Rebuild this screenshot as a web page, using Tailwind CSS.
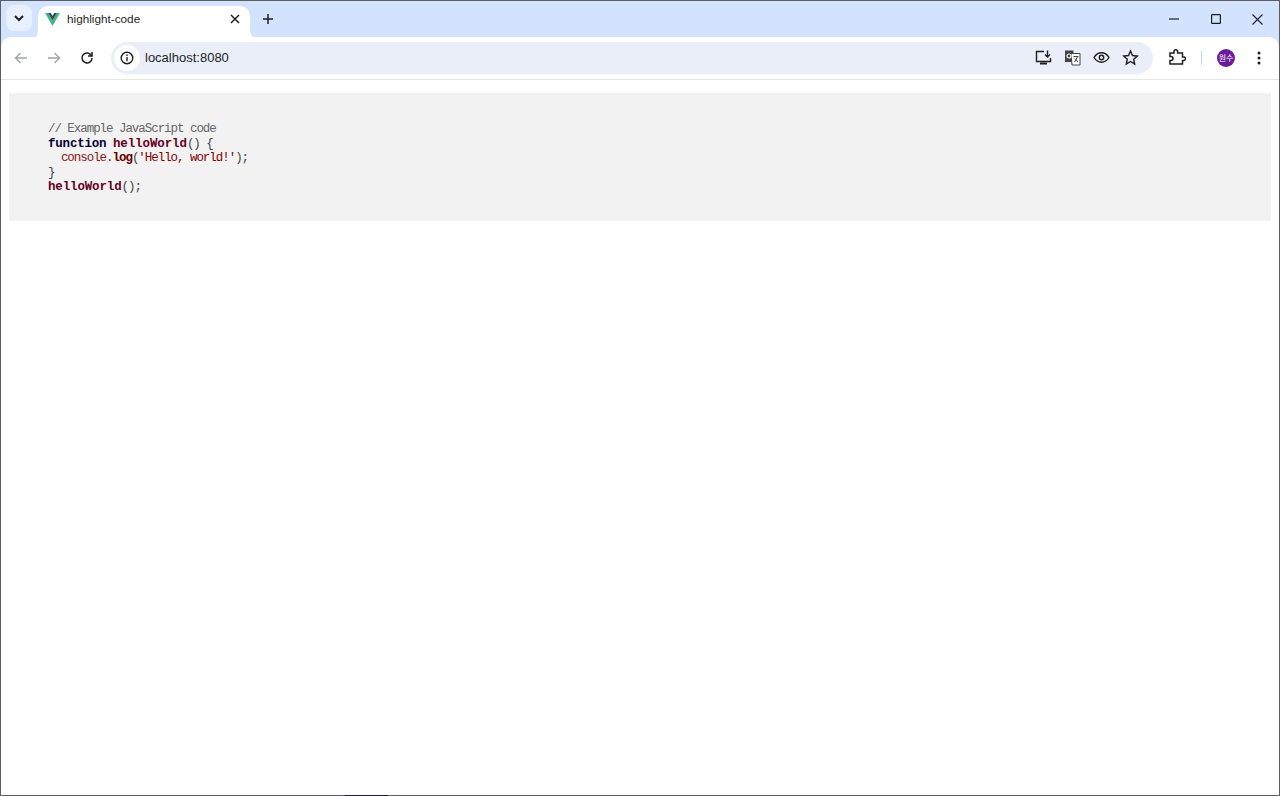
<!DOCTYPE html>
<html lang="en">
  <head>
    <meta charset="UTF-8" />
    <title>highlight-code</title>
    <script src="https://cdn.jsdelivr.net/npm/@tailwindcss/browser@4"></script>
  </head>
  <body class="relative h-[796px] overflow-hidden bg-white font-['Liberation_Sans',sans-serif]">
    <div class="flex h-full flex-col border border-[#5a5f66] bg-[#d3e3fd]">
      <!-- tab strip -->
      <div class="flex h-9 shrink-0 items-end">
        <div class="mb-[6px] ml-[5px] flex size-[26px] items-center justify-center rounded-lg bg-[#e9f0fd]">
          <svg width="12" height="12" viewBox="0 0 12 12" fill="none" stroke="#1f1f1f" stroke-width="2"><path d="M2 4l4 4 4-4" /></svg>
        </div>
        <div class="relative z-10 ml-[6px] -mb-[1px] flex h-[32px] w-[212px] items-center rounded-t-[10px] bg-white pb-[6px] pl-[7px] pr-2">
          <svg width="15" height="13" viewBox="0 0 16 14">
            <path d="M0 0h3.200L8 8.200 12.800 0H16L8 14z" fill="#41b883" />
            <path d="M3.200 0h3L8 3.200 9.800 0h3L8 8.200z" fill="#35495e" />
          </svg>
          <span class="ml-[7px] flex-1 text-[11.75px] text-[#1f1f1f]">highlight-code</span>
          <svg width="10" height="10" viewBox="0 0 10 10" stroke="#1f1f1f" stroke-width="1.500" class="mr-[2px]"><path d="M1 1l8 8M9 1l-8 8" /></svg>
          <svg width="8" height="8" viewBox="0 0 8 8" class="absolute bottom-0 left-full"><path d="M0 0C0 5 3 8 8 8H0z" fill="#fff" /></svg>
          <svg width="6" height="8" viewBox="0 0 6 8" class="absolute bottom-0 right-full"><path d="M6 0C6 5 4 8 0 8H6z" fill="#fff" /></svg>
        </div>
        <div class="mb-[6px] ml-[6px] flex size-6 items-center justify-center">
          <svg width="12" height="12" viewBox="0 0 12 12" stroke="#1f1f1f" stroke-width="1.500"><path d="M6 1v10M1 6h10" /></svg>
        </div>
        <div class="mb-[6px] ml-auto flex items-center">
          <div class="flex h-6 w-[42px] items-center justify-center">
            <svg width="10" height="10" viewBox="0 0 10 10" stroke="#1f1f1f" stroke-width="1.200"><path d="M0 5h10" /></svg>
          </div>
          <div class="flex h-6 w-[42px] items-center justify-center">
            <svg width="10" height="10" viewBox="0 0 10 10" fill="none" stroke="#1f1f1f" stroke-width="1.200"><rect x="0.600" y="0.600" width="8.800" height="8.800" rx="0.500" /></svg>
          </div>
          <div class="flex h-6 w-[42px] items-center justify-center pr-[1px]">
            <svg width="11" height="11" viewBox="0 0 11 11" stroke="#1f1f1f" stroke-width="1.100"><path d="M0.500 0.500l10 10M10.500 0.500l-10 10" /></svg>
          </div>
        </div>
      </div>
      <!-- toolbar -->
      <div class="flex h-[43px] shrink-0 items-center rounded-t-[10px] border-b border-[#e6e6e6] bg-white">
        <div class="flex w-[110px] items-center pl-[12px]">
          <svg width="16" height="16" viewBox="0 0 16 16" fill="none" stroke="#a0a3a8" stroke-width="1.400"><path d="M14 8H2.500M7.500 3 2.500 8l5 5" /></svg>
          <svg width="16" height="16" viewBox="0 0 16 16" fill="none" stroke="#a0a3a8" stroke-width="1.400" class="ml-[17px]"><path d="M2 8h11.500M8.500 3l5 5-5 5" /></svg>
          <svg width="16" height="16" viewBox="0 0 16 16" fill="none" stroke="#1f1f1f" stroke-width="1.500" class="ml-[17px]"><path d="M13 8a5 5 0 1 1-1.500-3.600L13 6" /><path d="M13 2v4H9" /></svg>
        </div>
        <div class="flex h-8 w-[1042px] items-center rounded-full bg-[#e9eef8] pl-[3px] pr-[14px]">
          <div class="flex size-[26px] items-center justify-center rounded-full bg-white">
            <svg width="14" height="14" viewBox="0 0 14 14" fill="none" stroke="#1f1f1f" stroke-width="1.400"><circle cx="7" cy="7" r="5.800" /><path d="M7 6v4.200M7 3.500v1.400" /></svg>
          </div>
          <span class="ml-[5px] flex-1 text-[13px] text-[#1f1f1f]">localhost:8080</span>
          <div class="mb-[1px] flex items-center gap-[12px]">
            <svg width="17" height="17" viewBox="0 0 17 17" fill="none" stroke="#1f1f1f" stroke-width="1.400"><path d="M9 2.500H1.500v10h14V9" /><path d="M5 14.500h7" stroke-width="2" /><path d="M12.500 1.500v6M10 5.500l2.500 2.500L15 5.500" /></svg>
            <svg width="17" height="17" viewBox="0 0 17 17"><path d="M1 1.500h8.500v11.500H1z" fill="#444" /><path d="M7 4.500h9V16H8z" fill="#fff" stroke="#444" /><path d="M9.500 7.500h5M12 7v1M10.500 13l3-5M11 9.500l3 3.500" fill="none" stroke="#444" /><circle cx="5" cy="7" r="2" fill="none" stroke="#fff" stroke-width="1.200" /></svg>
            <svg width="17" height="17" viewBox="0 0 17 17" fill="none" stroke="#1f1f1f" stroke-width="1.400"><path d="M1 8.500C3 5.300 5.500 3.800 8.500 3.800s5.500 1.500 7.500 4.700c-2 3.200-4.500 4.700-7.500 4.700S3 11.700 1 8.500z" /><circle cx="8.500" cy="8.500" r="2.200" /></svg>
            <svg width="17" height="17" viewBox="0 0 17 17" fill="none" stroke="#1f1f1f" stroke-width="1.400"><path d="M8.500 2l2 4.500 4.800.5-3.600 3.200 1 4.800-4.200-2.500L4.300 15l1-4.800L1.700 7l4.800-.5z" /></svg>
          </div>
        </div>
        <svg width="18" height="18" viewBox="0 0 18 18" fill="none" stroke="#1f1f1f" stroke-width="1.500" class="mb-[2px] ml-[15px]"><path d="M2 5h4V3.500a1.800 1.800 0 0 1 3.600 0V5h4.900v4h1.200a1.800 1.800 0 0 1 0 3.600h-1.200V16H2v-3.500h1a2 2 0 0 0 0-4H2z" /></svg>
        <div class="ml-[15px] h-[14px] w-px bg-[#c5d5ef]"></div>
        <div class="mb-[1px] ml-[15px] flex size-[18px] items-center justify-center rounded-full bg-[#6a1b9a] font-['Noto_Sans_CJK_KR',sans-serif] text-[8px] text-white">원수</div>
        <svg width="4" height="14" viewBox="0 0 4 14" fill="#1f1f1f" class="mb-[1px] ml-[22px]"><circle cx="2" cy="2" r="1.500" /><circle cx="2" cy="7" r="1.500" /><circle cx="2" cy="12" r="1.500" /></svg>
      </div>
      <!-- page -->
      <div class="flex-1 bg-white px-2 pt-[13px]">
        <pre class="h-[128px] bg-[#f2f2f2] pl-[39px] pt-[29px] font-['Liberation_Mono',monospace] text-[12.5px] leading-[14.5px] tracking-[-1.05px] text-[#444]"><span class="text-[#666]">// Example JavaScript code</span>
<span class="font-bold tracking-[-0.2px] text-[#000033]">function</span> <span class="font-bold tracking-[-0.1px] text-[#660022]">helloWorld</span>() {
  <span class="text-[#852020]">console.</span><span class="font-bold text-[#660000]">log</span>(<span class="text-[#800000]">'Hello, world!'</span>);
}
<span class="font-bold tracking-[-0.15px] text-[#660022]">helloWorld</span>();</pre>
      </div>
    </div>
    <div class="absolute bottom-0 left-[345px] h-px w-[43px] bg-[#1a1a4a]"></div>
  </body>
</html>
